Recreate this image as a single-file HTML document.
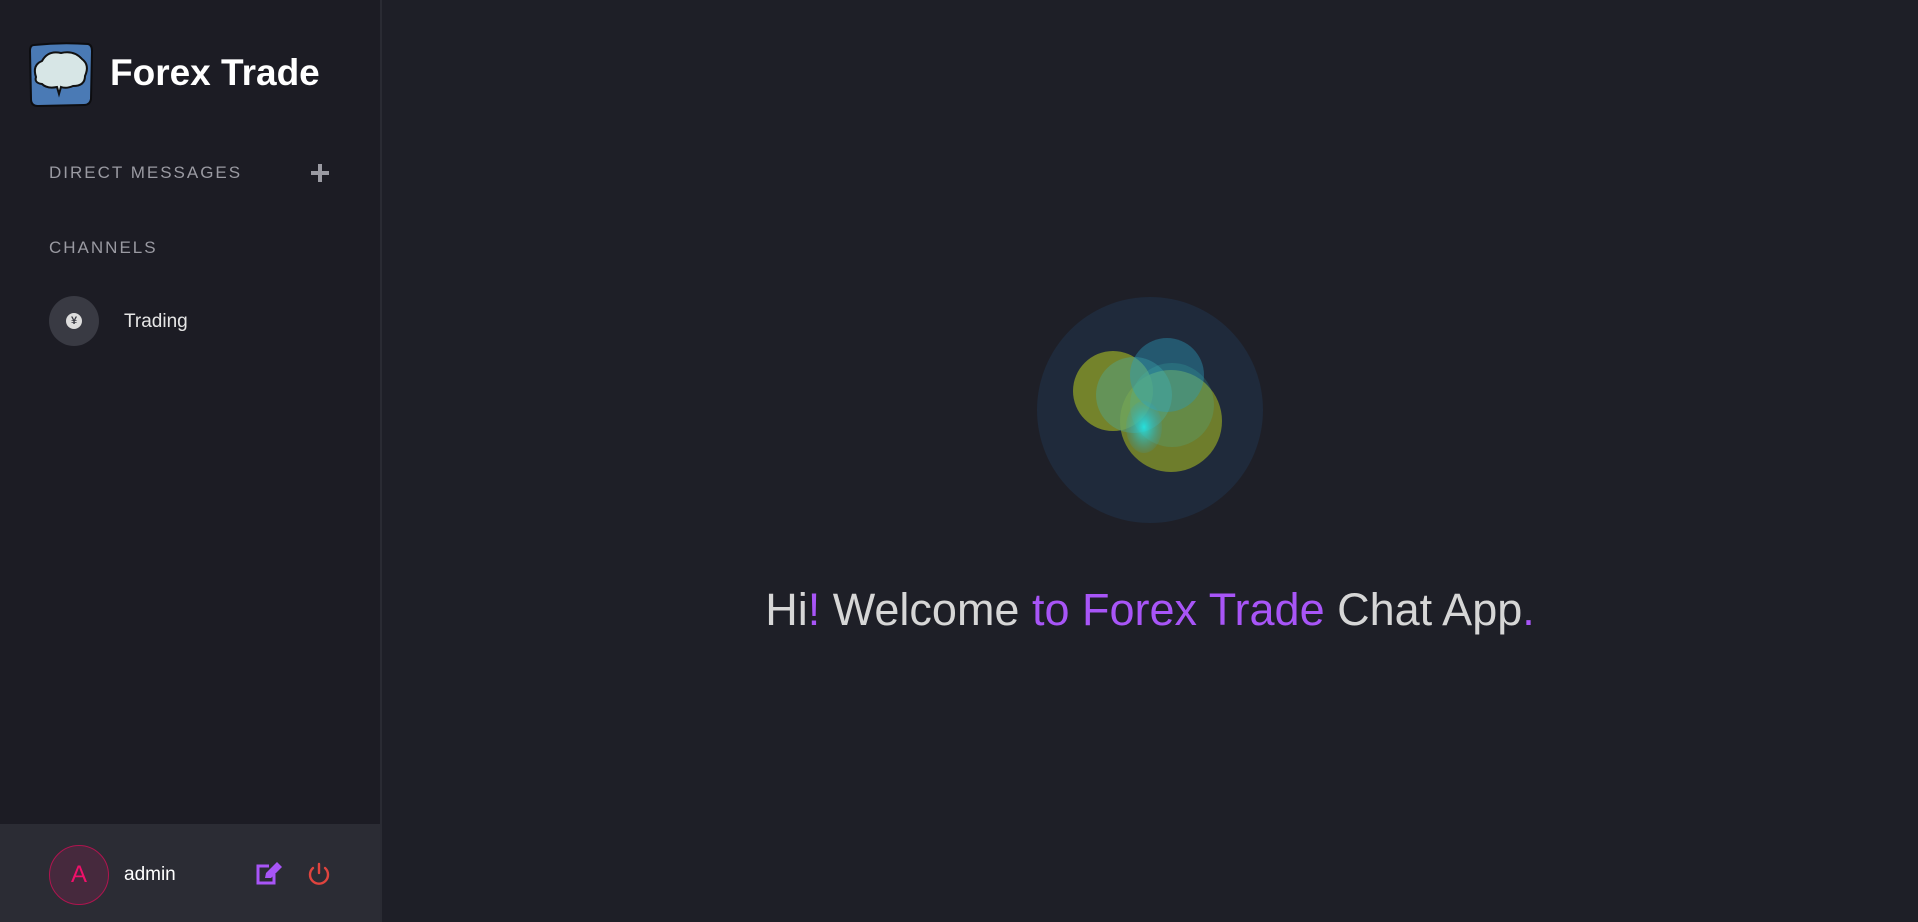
<!DOCTYPE html>
<html><head><meta charset="utf-8"><style>
*{margin:0;padding:0;box-sizing:border-box}
body{width:1918px;height:922px;background:#1e1f27;font-family:"Liberation Sans",sans-serif;position:relative;overflow:hidden}
.side{position:absolute;left:0;top:0;width:382px;height:922px;background:#1c1c24;border-right:2px solid #2a2b33}
.abs{position:absolute}
.lbl{color:#9a9aa2;font-size:17px;letter-spacing:2px}
</style></head><body>
<div class="side">
 <svg class="abs" style="left:28px;top:41px" width="66" height="66" viewBox="0 0 66 66">
  <path d="M6 4 Q33 1 60 3 Q64 4 64 10 L63 58 Q62 64 56 64 L10 65 Q3 65 3 58 L2 10 Q2 4 6 4Z" fill="#4a7ab5" stroke="#0d0d10" stroke-width="2"/>
  <path d="M8 36 Q4 24 14 20 Q20 9 33 12 Q46 9 54 18 Q62 24 57 35 Q57 45 45 45 Q38 48 33 46 L31 53 L29 46 Q19 48 14 43 Q6 42 8 36Z" fill="#d7e6e6" stroke="#111" stroke-width="2"/>
 </svg>
 <div class="abs" style="left:110px;top:52px;color:#fff;font-size:37px;font-weight:bold">Forex Trade</div>
 <div class="abs lbl" style="left:49px;top:163px">DIRECT MESSAGES</div>
 <div class="abs" style="left:311px;top:164px;width:18px;height:18px">
  <div class="abs" style="left:7px;top:0;width:4px;height:18px;background:#9a9aa2"></div>
  <div class="abs" style="left:0;top:7px;width:18px;height:4px;background:#9a9aa2"></div>
 </div>
 <div class="abs lbl" style="left:49px;top:238px">CHANNELS</div>
 <div class="abs" style="left:49px;top:296px;width:50px;height:50px;border-radius:50%;background:#393a43"></div>
 <div class="abs" style="left:66px;top:313px;width:16px;height:16px;border-radius:50%;background:#ddd;color:#393a43;font-size:11px;font-weight:bold;text-align:center;line-height:16px">¥</div>
 <div class="abs" style="left:124px;top:311px;color:#e6e6e6;font-size:19px">Trading</div>
 <div class="abs" style="left:0;top:824px;width:380px;height:98px;background:#2b2c34">
  <div class="abs" style="left:49px;top:21px;width:60px;height:60px;border-radius:50%;background:#46293d;border:1.5px solid #b0144f;color:#f0106a;font-size:24px;text-align:center;line-height:57px">A</div>
  <div class="abs" style="left:124px;top:40px;color:#fff;font-size:19px">admin</div>
  <svg class="abs" style="left:255px;top:38px" width="27" height="24" viewBox="0 0 27 24"><path d="M14 4 H3 V21 H19 V12" fill="none" stroke="#a855f7" stroke-width="3"/><path d="M10 16 L11 11 L22 0 L27 5 L16 16Z" fill="#a855f7"/></svg>
  <svg class="abs" style="left:307px;top:38px" width="24" height="24" viewBox="0 0 24 24"><path d="M6 6 A9 9 0 1 0 18 6" fill="none" stroke="#e0443e" stroke-width="2.4" stroke-linecap="round"/><path d="M12 2 V11" stroke="#e0443e" stroke-width="2.4" stroke-linecap="round"/></svg>
 </div>
</div>
<svg class="abs" style="left:1037px;top:297px" width="226" height="226" viewBox="0 0 226 226">
 <defs>
  <radialGradient id="c" cx="0.5" cy="0.5"><stop offset="0" stop-color="#20e8e8" stop-opacity=".9"/><stop offset="1" stop-color="#30a0c0" stop-opacity=".15"/></radialGradient>
 </defs>
 <circle cx="113" cy="113" r="113" fill="#1f2a3b"/>
 <circle cx="76" cy="94" r="40" fill="#8a9a28" opacity=".8"/>
 <circle cx="134" cy="124" r="51" fill="#8a9a28" opacity=".75"/>
 <circle cx="130" cy="78" r="37" fill="#2a90b0" opacity=".45"/>
 <circle cx="97" cy="98" r="38" fill="#3fb8c0" opacity=".3"/>
 <circle cx="135" cy="108" r="42" fill="#40c0b0" opacity=".2"/>
 <ellipse cx="107" cy="130" rx="18" ry="26" fill="url(#c)"/>
</svg>
<div class="abs" style="left:382px;width:1536px;top:584px;text-align:center;font-size:45px;color:#d6d6d6;white-space:nowrap">Hi<span style="color:#a855f7">!</span> Welcome <span style="color:#a855f7">to Forex Trade</span> Chat App<span style="color:#a855f7">.</span></div>
</body></html>
